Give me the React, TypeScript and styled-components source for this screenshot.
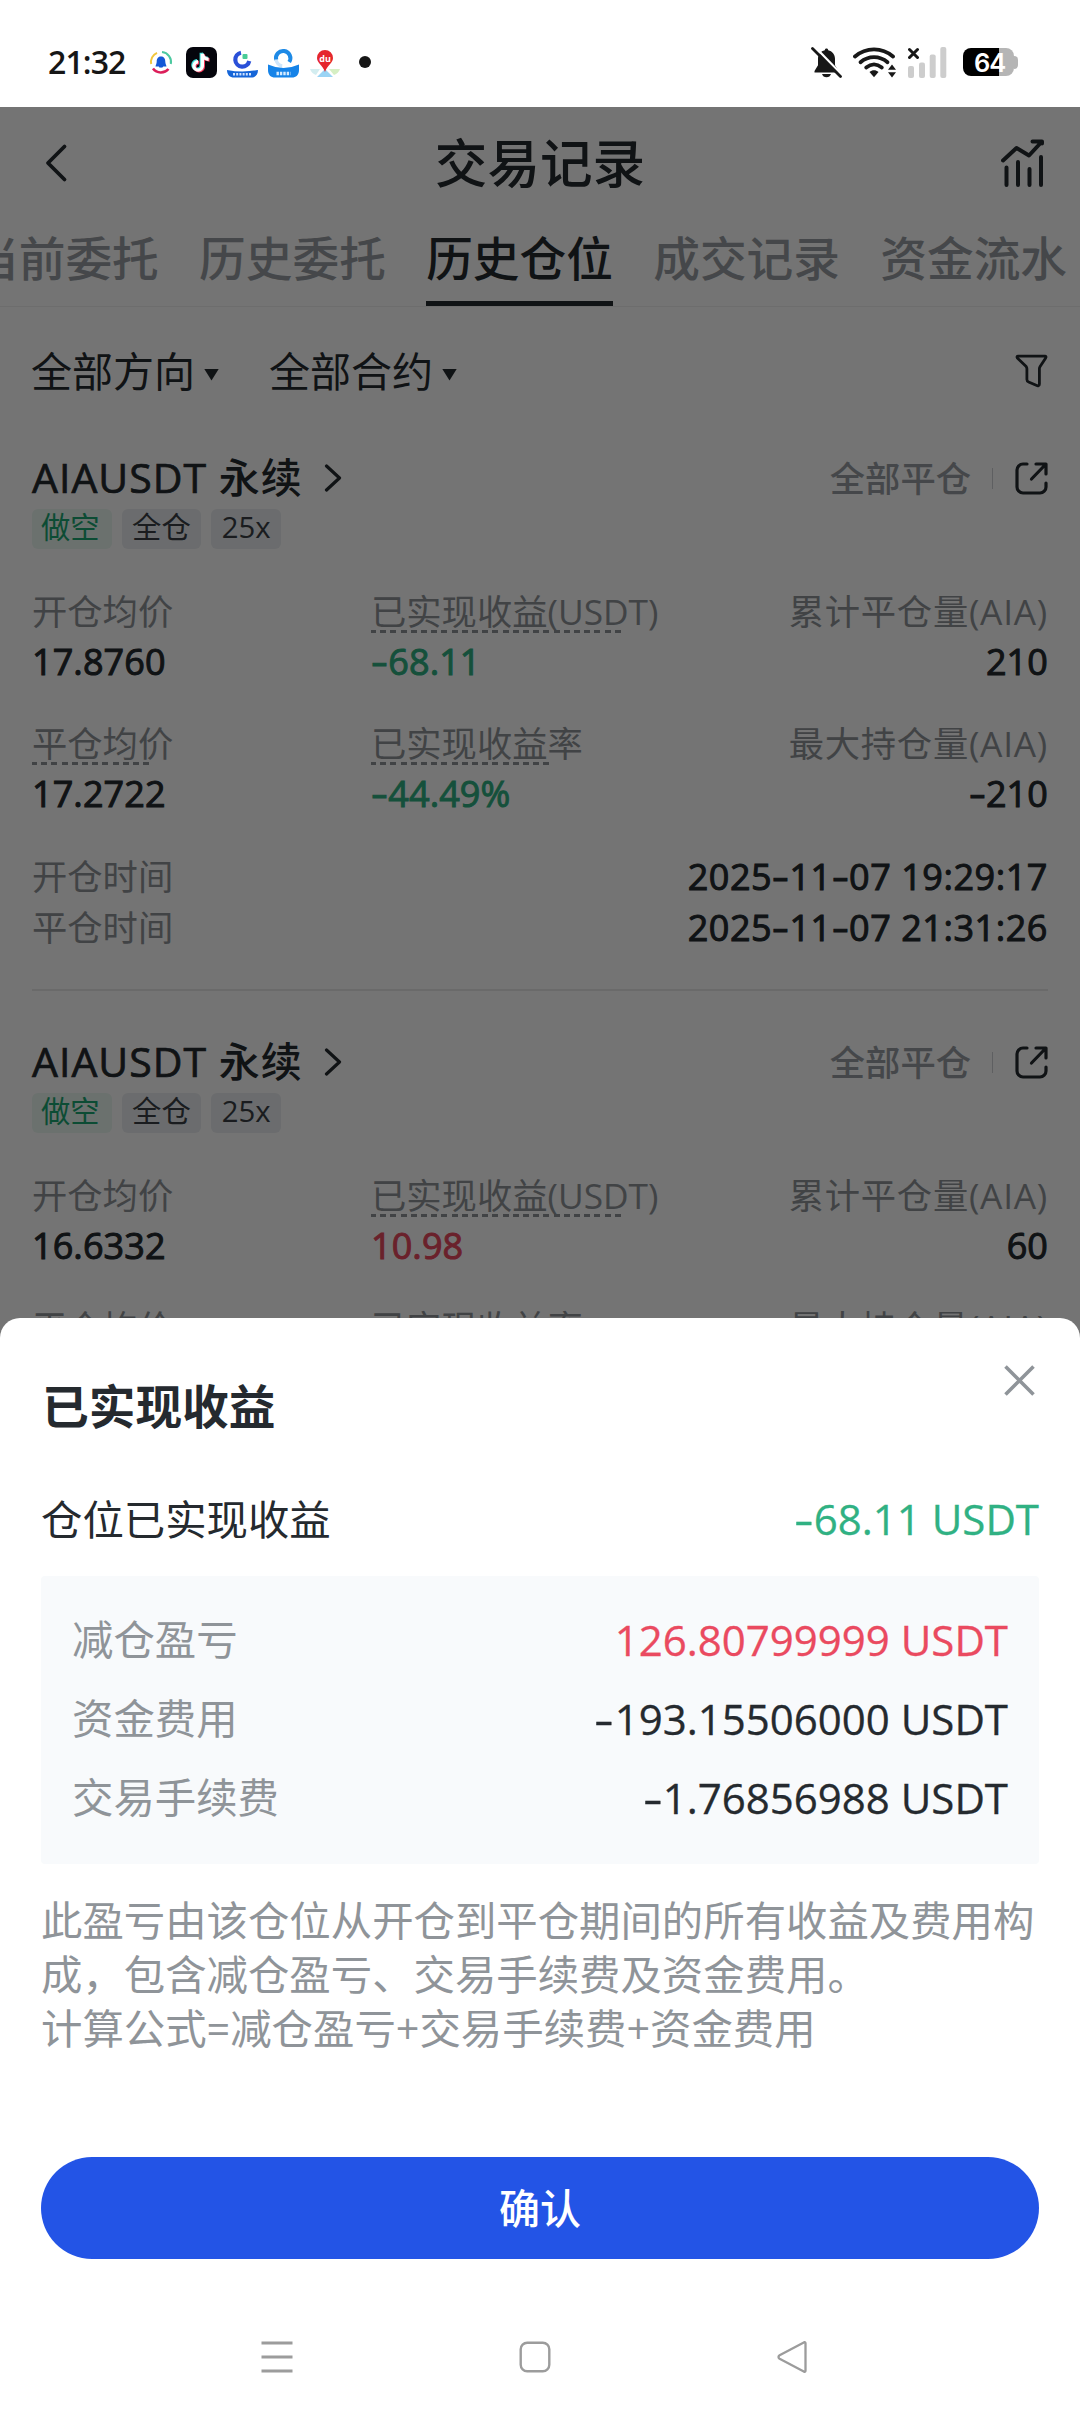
import React from 'react';
import styled, { createGlobalStyle, css } from 'styled-components';

const GlobalStyle = createGlobalStyle`
  * { box-sizing: border-box; }
  body { margin: 0; background: #fff; }
  svg { display: block; flex: none; }
`;

const INK = '#252a2f';
const MUTED = '#8f9499';
const GREEN = '#30b183';
const RED = '#ea4a60';

const tones = { ink: INK, muted: MUTED, green: GREEN, red: RED };
type Tone = keyof typeof tones;

const Screen = styled.div`
  position: relative;
  width: 1080px;
  height: 2412px;
  overflow: hidden;
  background: #fff;
  color: ${INK};
  font-family: 'Open Sans', 'Noto Sans CJK SC', sans-serif;
  font-size: 41.4px;
  white-space: nowrap;
`;

/* ---------- status bar ---------- */

const StatusBar = styled.header`
  display: flex;
  align-items: center;
  justify-content: space-between;
  height: 107px;
  padding: 17px 62px 0 48px;
`;

const StatusGroup = styled.div<{ $gap: number }>`
  display: flex;
  align-items: center;
  gap: ${(p) => p.$gap}px;
`;

const Clock = styled.span`
  width: 88px;
  font-family: 'Open Sans', sans-serif;
  font-weight: 600;
  font-size: 32px;
  line-height: 32px;
  letter-spacing: -0.9px;
  color: #161616;
`;

const MoreDot = styled.i`
  width: 12px;
  height: 12px;
  margin-left: 5px;
  border-radius: 50%;
  background: #161616;
`;

const Battery = styled.div`
  display: flex;
  align-items: center;
  margin-left: 5px;
`;

const BatteryBody = styled.div`
  width: 51px;
  height: 28px;
  border-radius: 8px;
  background: linear-gradient(90deg, #000 36px, #b5b5b5 36px);
  color: #fff;
  font-family: Inter, sans-serif;
  font-weight: 600;
  font-size: 25.5px;
  line-height: 29px;
  letter-spacing: -1px;
  padding-left: 11px;
`;

const BatteryNub = styled.div`
  width: 4px;
  height: 13px;
  border-radius: 0 4px 4px 0;
  background: #b5b5b5;
`;

/* ---------- page ---------- */

const TitleBar = styled.div`
  display: grid;
  grid-template-columns: 60px 1fr 60px;
  align-items: center;
  height: 112px;
  padding: 0 36px 0 44px;
`;

const PageTitle = styled.h1`
  margin: 0;
  text-align: center;
  font-size: 52.6px;
  line-height: 60px;
  font-weight: 500;
  text-indent: -8px;
`;

const TitleAction = styled.div`
  display: flex;
  justify-content: flex-end;
`;

const Tabs = styled.nav`
  display: flex;
  gap: 40.3px;
  margin-left: -28px;
  border-bottom: 1px solid #efefef;
`;

const Tab = styled.div<{ $active?: boolean }>`
  flex: none;
  height: 87px;
  font-size: 46.7px;
  line-height: 78px;
  font-weight: 500;
  color: ${(p) => (p.$active ? INK : '#989da2')};
  border-bottom: 5px solid ${(p) => (p.$active ? INK : 'transparent')};
`;

const FilterBar = styled.div`
  display: flex;
  align-items: center;
  gap: 50px;
  height: 129px;
  padding: 0 32px 1px 31px;
`;

const Dropdown = styled.div`
  display: flex;
  align-items: center;
  gap: 9px;
  font-size: 41px;
  line-height: 50px;
`;

const Caret = styled.i`
  width: 15px;
  height: 12px;
  margin-top: 7px;
  background: ${INK};
  clip-path: polygon(0 0, 100% 0, 50% 100%);
`;

const Spacer = styled.div`
  flex: 1;
`;

const PositionCard = styled.article`
  height: 555px;
  margin: 0 32px 29px;
  padding-top: 17px;
  border-bottom: 2px solid #e9e9ea;
`;

const CardHead = styled.div`
  display: flex;
  align-items: center;
  height: 50px;
`;

const Pair = styled.div`
  font-size: 41px;
  font-weight: 500;
  line-height: 48px;
  height: 50px;
  letter-spacing: 1px;
  margin-right: 21px;
`;

const PairSymbol = styled.span`
  -webkit-text-stroke: 0.7px currentColor;
`;

const CloseState = styled.div`
  font-size: 35.3px;
  line-height: 50px;
  font-weight: 500;
  color: #989da2;
`;

const Rule = styled.div`
  width: 1px;
  height: 21px;
  margin: 0 22px 0 21px;
  background: #cfd2d5;
`;

const Tags = styled.div`
  display: flex;
  gap: 10px;
  margin-top: 6px;
`;

const Tag = styled.span<{ $short?: boolean }>`
  height: 40px;
  padding: 0 10.5px;
  border-radius: 6px;
  font-size: 29.3px;
  line-height: 37px;
  ${(p) =>
    p.$short
      ? css`
          padding: 0 12px 0 9px;
          color: #1ca873;
          background: #ebf8f2;
        `
      : css`
          color: #3a3f45;
          background: #ebeef1;
        `}
`;

const Stats = styled.div`
  display: grid;
  grid-template-columns: 339px 1fr auto;
  row-gap: 32px;
  margin-top: 38px;
`;

const Stat = styled.div<{ $end?: boolean }>`
  text-align: ${(p) => (p.$end ? 'right' : 'left')};
  letter-spacing: ${(p) => (p.$end ? 0.75 : 0)}px;
`;

const StatLabel = styled.div<{ $dash?: number }>`
  height: 50px;
  font-size: 35.3px;
  line-height: 48px;
  color: ${MUTED};
  ${(p) =>
    p.$dash &&
    css`
      background: repeating-linear-gradient(90deg, #8f9499 0 6px, transparent 6px 10.2px) -1px 43px / ${p.$dash}px 3px
        no-repeat;
    `}
`;

const Value = styled.div<{ $tone?: Tone; $track?: number }>`
  font-size: 36px;
  line-height: 50px;
  font-weight: 500;
  -webkit-text-stroke: 1px currentColor;
  letter-spacing: ${(p) => p.$track ?? 0}px;
  color: ${(p) => tones[p.$tone ?? 'ink']};
`;

const Times = styled.div`
  margin-top: 33px;
`;

const TimeRow = styled.div`
  display: flex;
  justify-content: space-between;
  height: 51px;
`;

/* Hyphens are drawn wider than the text face has them. */
const Dash = styled.span`
  display: inline-block;
  width: 0.48em;
  text-align: left;
  letter-spacing: 0;
  transform: scaleX(1.45);
  transform-origin: left;
`;

/* ---------- overlay and bottom sheet ---------- */

const Scrim = styled.div`
  position: absolute;
  inset: 107px 0 0;
  background: rgba(0, 0, 0, 0.545);
`;

const Sheet = styled.section`
  position: absolute;
  inset: 1318px 0 0;
  display: flex;
  flex-direction: column;
  padding: 47px 41px 0;
  border-radius: 20px 20px 0 0;
  background: #fff;
`;

const SheetHead = styled.div`
  display: flex;
  justify-content: space-between;
  align-items: flex-start;
  height: 72px;
  padding-right: 4px;
`;

const SheetTitle = styled.h2`
  margin: 11px 0 0 1px;
  font-size: 46.7px;
  line-height: 60px;
  font-weight: 700;
`;

const SummaryRow = styled.div`
  display: flex;
  justify-content: space-between;
  margin: 52px 0 27px;
  line-height: 60px;
`;

const Amount = styled.span<{ $tone?: Tone }>`
  font-size: 42px;
  -webkit-text-stroke: 0.3px currentColor;
  color: ${(p) => tones[p.$tone ?? 'ink']};
`;

const Breakdown = styled.div`
  height: 288px;
  padding: 24px 31px 27px;
  border-radius: 4px;
  background: #f8fafc;
`;

const BreakdownRow = styled.div`
  display: flex;
  justify-content: space-between;
  line-height: 79px;
`;

const Muted = styled.span`
  color: ${MUTED};
`;

const Note = styled.p`
  height: 162px;
  margin: 30px 0 101px;
  line-height: 53.8px;
  color: ${MUTED};
`;

const ConfirmButton = styled.button`
  flex: none;
  height: 102px;
  padding: 0 0 4px;
  border: 0;
  border-radius: 51px;
  background: #2354e6;
  color: #fff;
  font: 500 41px 'Open Sans', 'Noto Sans CJK SC', sans-serif;
`;

const SystemNav = styled.footer`
  display: flex;
  align-items: center;
  gap: 226px;
  height: 111px;
  margin-top: auto;
  padding-left: 220px;
`;

/* ---------- icons ---------- */

const NotifyIcon = () => (
  <svg width="24" height="24" viewBox="0 0 24 24" fill="none" strokeWidth="2">
    <path d="M2.200 14A10 10 0 0 1 8 2.800" stroke="#f2c63c" />
    <path d="M13 2A10 10 0 0 1 21.800 14" stroke="#4cc9a0" />
    <path d="M4 18.500A10 10 0 0 0 19.500 19" stroke="#dc1e5a" strokeWidth="2.600" />
    <path d="M12 6.500c-3.400 0-4.300 2.800-4.300 5.200 0 2-.9 3-1.200 4.800h3.300c.4 1.600 4 1.600 4.400 0h3.300c-.3-1.800-1.200-2.800-1.200-4.800 0-2.400-.9-5.200-4.300-5.200z" fill="#1557d6" />
  </svg>
);

const notePath = 'M15.5 6.5v12.2a4.2 4.2 0 1 1-4.2-4.2M15.5 6.5c.5 3.5 3 5.3 6.3 5.5';

const TikTokIcon = () => (
  <svg width="31" height="31" viewBox="0 0 31 31" fill="none" strokeWidth="3.400">
    <rect width="31" height="31" rx="7" fill="#05050c" />
    <path d={notePath} stroke="#3fe0dc" transform="translate(-.2 -.7)" />
    <path d={notePath} stroke="#f2385a" transform="translate(1.800 1)" />
    <path d={notePath} stroke="#fff" transform="translate(.8 .2)" />
  </svg>
);

const ArcAppIcon = () => (
  <svg width="31" height="31" viewBox="0 0 31 31" fill="none">
    <path d="M14 5.800a7 7 0 1 0 8.200 8.200" stroke="#2a50d8" strokeWidth="4.200" />
    <rect x="15.500" y="7" width="5" height="5" rx="1" fill="#48cc96" />
    <path d="M0 23q15.500 3 31 0c0 5-3 7.500-7 7.500H7c-4 0-7-2.500-7-7.500z" fill="#1565d8" />
    <path d="M6 27.300h19" stroke="#cfe2ff" strokeWidth="2.600" strokeDasharray="2 1.200" />
  </svg>
);

const RingAppIcon = () => (
  <svg width="31" height="31" viewBox="0 0 31 31" fill="none">
    <path d="M8.200 13a7.200 7.200 0 1 1 13 2" stroke="#1e8ae6" strokeWidth="4" />
    <path d="M8.200 12.500c0 3 2.500 6 6 6.500" stroke="#cfe6fb" strokeWidth="3.400" />
    <path d="M0 17.500q15.500 7 31 0V23c0 5-3 7.500-7 7.500H7c-4 0-7-2.500-7-7.500z" fill="#1583e8" />
    <path d="M8.500 26.500h14" stroke="#d5ebff" strokeWidth="3.400" strokeDasharray="2.400 1" />
  </svg>
);

const MapIcon = () => (
  <svg width="32" height="31" viewBox="0 0 32 31">
    <path d="M1 22h10l-4 6c-3-1-5-3-6-6z" fill="#d3edf0" />
    <path d="M16 22l8 8H8z" fill="#9ad4f5" />
    <path d="M20 22h11c-1 3-3 5-6 6z" fill="#d6efc4" />
    <path d="M16 3a8 8 0 0 1 8 8c0 5-5.500 7-8 14-2.500-7-8-9-8-14a8 8 0 0 1 8-8z" fill="#e5272d" />
    <text x="16" y="14.500" textAnchor="middle" fontSize="9" fontWeight="700" fontFamily="Open Sans, sans-serif" fill="#fff">
      du
    </text>
  </svg>
);

const MutedBellIcon = () => (
  <svg width="31" height="31" viewBox="0 0 31 31" fill="none">
    <path d="M15.500 1.500c1 0 1.600.7 1.700 1.700 4 .8 6.800 4.200 6.800 8.600v6.500l3.500 5.700v1.500h-24V24L7 18.300v-6.500c0-4.400 2.800-7.800 6.800-8.600.1-1 .7-1.700 1.700-1.700z" fill="#181818" />
    <path d="M11 27h9c-.5 2-2.300 3.300-4.500 3.300S11.500 29 11 27z" fill="#181818" />
    <path d="M3.500-.5l28 29" stroke="#fff" strokeWidth="2.400" />
    <path d="M1.500 1.500l28 28" stroke="#181818" strokeWidth="2.800" strokeLinecap="round" />
  </svg>
);

const WifiIcon = () => (
  <svg width="44" height="31" viewBox="0 0 44 31" fill="none">
    <g stroke="#181818" strokeWidth="3.800" strokeLinecap="round">
      <path d="M2 9.500c11-9.500 27-9.500 38 0" />
      <path d="M7.500 15.300c8-6.800 19-6.800 27 0" />
      <path d="M13.200 20.500c5-4 10.600-4 15.600 0" />
    </g>
    <path d="M16.500 25c2.700-2.300 6.300-2.300 9 0L21 30.300z" fill="#181818" />
    <path d="M39 17.500l4 5.300h-8zM39 30.500l4-5.300h-8z" fill="#181818" />
  </svg>
);

const SignalIcon = () => (
  <svg width="39" height="31" viewBox="0 0 39 31">
    <g fill="#cdcdcd">
      <rect x="0" y="19" width="6" height="12" rx="2" />
      <rect x="11" y="15.500" width="6" height="15.500" rx="2" />
      <rect x="21.700" y="7.500" width="6" height="23.500" rx="2" />
      <rect x="32.300" y="0" width="6" height="31" rx="2" />
    </g>
    <path d="M1.500 2.500l8 8M9.500 2.500l-8 8" stroke="#181818" strokeWidth="3" strokeLinecap="round" />
  </svg>
);

const BackIcon = () => (
  <svg width="24" height="40" viewBox="0 0 24 40" fill="none">
    <path d="M20.500 3.500L4 20l16.500 16.500" stroke={INK} strokeWidth="3.800" strokeLinecap="round" strokeLinejoin="round" />
  </svg>
);

const ChartIcon = () => (
  <svg width="43" height="48" viewBox="0 0 43 48" fill="none" stroke={INK} strokeWidth="4" strokeLinecap="round" strokeLinejoin="round">
    <path d="M2 21.500L15.500 9l12.500 7.500L40.500 3M31.500 2.500h9.500v2" />
    <path d="M5.500 28.500v17.500M17 23v23M28.500 30v16M40 18v28" />
  </svg>
);

const FunnelIcon = () => (
  <svg width="33" height="34" viewBox="0 0 33 34" fill="none">
    <path d="M3 2.200h27c1 0 1.300.9.700 1.700l-5.600 8.600c-.5.8-.7 1.400-.7 2.200v15.200c0 1.500-1.300 2.300-2.600 1.700l-8.200-3.600c-1-.4-1.700-1.200-1.700-2.400V14.700c0-.8-.2-1.400-.7-2.100L2.300 3.900C1.700 3.100 2 2.200 3 2.200z" stroke={INK} strokeWidth="2.800" strokeLinejoin="round" />
  </svg>
);

const ForwardIcon = () => (
  <svg width="18" height="28" viewBox="0 0 18 28" fill="none">
    <path d="M2.500 2L15.500 14 2.500 26" stroke={INK} strokeWidth="3.200" strokeLinecap="round" strokeLinejoin="round" />
  </svg>
);

const ShareIcon = () => (
  <svg width="33" height="33" viewBox="0 0 33 33" fill="none" stroke={INK} strokeWidth="3.200" strokeLinecap="round" strokeLinejoin="round">
    <path d="M12 2H8a6 6 0 0 0-6 6v17a6 6 0 0 0 6 6h17a6 6 0 0 0 6-6v-4" />
    <path d="M16.500 17L30.500 2.500M21 2h10v10" />
  </svg>
);

const CloseIcon = () => (
  <svg width="31" height="31" viewBox="0 0 31 31" fill="none">
    <path d="M1.500 1.500l28 28M29.500 1.500l-28 28" stroke="#8f9499" strokeWidth="3.600" />
  </svg>
);

const RecentsIcon = () => (
  <svg width="32" height="32" viewBox="0 0 32 32">
    <path d="M.5 2h31M.5 16h31M.5 30h31" stroke="#9c9c9c" strokeWidth="2.800" />
  </svg>
);

const HomeIcon = () => (
  <svg width="32" height="32" viewBox="0 0 32 32">
    <rect x="1.700" y="1.700" width="28.600" height="28.600" rx="6.500" fill="none" stroke="#9c9c9c" strokeWidth="2.400" />
  </svg>
);

const NavBackIcon = () => (
  <svg width="32" height="32" viewBox="0 0 32 32">
    <path d="M28.500 2.200v27.600c0 1-.9 1.400-1.700.8L2.600 17.800c-1.500-1-1.500-2.600 0-3.600L26.800 1.400c.8-.6 1.700-.2 1.700.8z" fill="none" stroke="#9c9c9c" strokeWidth="2.300" strokeLinejoin="round" />
  </svg>
);

/* ---------- data ---------- */

interface Cell {
  label: string;
  value: string;
  dash?: number;
  tone?: Tone;
}

interface Position {
  cells: Cell[];
  opened: string;
  closed: string;
}

const positions: Position[] = [
  {
    cells: [
      { label: '开仓均价', value: '17.8760' },
      { label: '已实现收益(USDT)', value: '-68.11', dash: 251, tone: 'green' },
      { label: '累计平仓量(AIA)', value: '210' },
      { label: '平仓均价', value: '17.2722', dash: 118 },
      { label: '已实现收益率', value: '-44.49%', dash: 180, tone: 'green' },
      { label: '最大持仓量(AIA)', value: '-210' },
    ],
    opened: '2025-11-07 19:29:17',
    closed: '2025-11-07 21:31:26',
  },
  {
    cells: [
      { label: '开仓均价', value: '16.6332' },
      { label: '已实现收益(USDT)', value: '10.98', dash: 251, tone: 'red' },
      { label: '累计平仓量(AIA)', value: '60' },
      { label: '平仓均价', value: '', dash: 118 },
      { label: '已实现收益率', value: '', dash: 180 },
      { label: '最大持仓量(AIA)', value: '' },
    ],
    opened: '',
    closed: '',
  },
];

const tabs = ['当前委托', '历史委托', '历史仓位', '成交记录', '资金流水'];

const breakdown: { label: string; value: string; tone?: Tone }[] = [
  { label: '减仓盈亏', value: '126.80799999 USDT', tone: 'red' },
  { label: '资金费用', value: '-193.15506000 USDT' },
  { label: '交易手续费', value: '-1.76856988 USDT' },
];

const Figure = ({ text }: { text: string }) => (
  <>
    {text.split('-').map((part, i) => (
      <React.Fragment key={i}>
        {i > 0 && <Dash>-</Dash>}
        {part}
      </React.Fragment>
    ))}
  </>
);

const PositionItem = ({ position }: { position: Position }) => (
  <PositionCard>
    <CardHead>
      <Pair>
        <PairSymbol>AIAUSDT</PairSymbol> 永续
      </Pair>
      <ForwardIcon />
      <Spacer />
      <CloseState>全部平仓</CloseState>
      <Rule />
      <ShareIcon />
    </CardHead>
    <Tags>
      <Tag $short>做空</Tag>
      <Tag>全仓</Tag>
      <Tag>25x</Tag>
    </Tags>
    <Stats>
      {position.cells.map((cell, i) => (
        <Stat key={cell.label} $end={i % 3 === 2}>
          <StatLabel $dash={cell.dash}>{cell.label}</StatLabel>
          <Value $tone={cell.tone} $track={0.1}>
            <Figure text={cell.value} />
          </Value>
        </Stat>
      ))}
    </Stats>
    {position.opened && (
      <Times>
        <TimeRow>
          <StatLabel>开仓时间</StatLabel>
          <Value $track={0.55}>
            <Figure text={position.opened} />
          </Value>
        </TimeRow>
        <TimeRow>
          <StatLabel>平仓时间</StatLabel>
          <Value $track={0.55}>
            <Figure text={position.closed} />
          </Value>
        </TimeRow>
      </Times>
    )}
  </PositionCard>
);

export default function App() {
  return (
    <Screen>
      <GlobalStyle />
      <StatusBar>
        <StatusGroup $gap={13}>
          <Clock>21:32</Clock>
          <NotifyIcon />
          <StatusGroup $gap={10}>
            <TikTokIcon />
            <ArcAppIcon />
            <RingAppIcon />
            <MapIcon />
          </StatusGroup>
          <MoreDot />
        </StatusGroup>
        <StatusGroup $gap={11}>
          <MutedBellIcon />
          <WifiIcon />
          <SignalIcon />
          <Battery>
            <BatteryBody>64</BatteryBody>
            <BatteryNub />
          </Battery>
        </StatusGroup>
      </StatusBar>

      <TitleBar>
        <BackIcon />
        <PageTitle>交易记录</PageTitle>
        <TitleAction>
          <ChartIcon />
        </TitleAction>
      </TitleBar>

      <Tabs>
        {tabs.map((t) => (
          <Tab key={t} $active={t === '历史仓位'}>
            {t}
          </Tab>
        ))}
      </Tabs>

      <FilterBar>
        <Dropdown>
          全部方向
          <Caret />
        </Dropdown>
        <Dropdown>
          全部合约
          <Caret />
        </Dropdown>
        <Spacer />
        <FunnelIcon />
      </FilterBar>

      {positions.map((p) => (
        <PositionItem key={p.cells[0].value} position={p} />
      ))}

      <Scrim />

      <Sheet>
        <SheetHead>
          <SheetTitle>已实现收益</SheetTitle>
          <CloseIcon />
        </SheetHead>
        <SummaryRow>
          <span>仓位已实现收益</span>
          <Amount $tone="green">
            <Figure text="-68.11 USDT" />
          </Amount>
        </SummaryRow>
        <Breakdown>
          {breakdown.map((row) => (
            <BreakdownRow key={row.label}>
              <Muted>{row.label}</Muted>
              <Amount $tone={row.tone}>
                <Figure text={row.value} />
              </Amount>
            </BreakdownRow>
          ))}
        </Breakdown>
        <Note>
          此盈亏由该仓位从开仓到平仓期间的所有收益及费用构
          <br />
          成，包含减仓盈亏、交易手续费及资金费用。
          <br />
          计算公式=减仓盈亏+交易手续费+资金费用
        </Note>
        <ConfirmButton>确认</ConfirmButton>
        <SystemNav>
          <RecentsIcon />
          <HomeIcon />
          <NavBackIcon />
        </SystemNav>
      </Sheet>
    </Screen>
  );
}
